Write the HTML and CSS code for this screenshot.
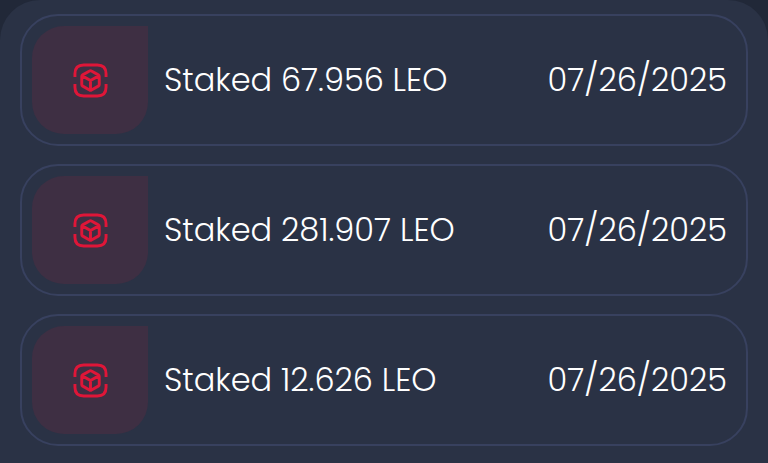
FILE: index.html
```html
<!DOCTYPE html>
<html lang="en">
<head>
<meta charset="utf-8">
<meta name="viewport" content="width=device-width, initial-scale=1">
<title>Staking history</title>
<link rel="stylesheet" href="styles.css">
</head>
<body>
<svg class="sprite" aria-hidden="true">
  <symbol id="stake" viewBox="0 0 36 36">
    <path d="M2 14.500V11Q2 2 11 2H25Q34 2 34 11V14.500M2 21.500V25Q2 34 11 34H25Q34 34 34 25V21.500"/>
    <path d="M17 8.300Q18 7.700 19 8.300L26 12.200Q27 12.800 27 14V22Q27 23.200 26 23.800L19 27.700Q18 28.300 17 27.700L10 23.800Q9 23.200 9 22V14Q9 12.800 10 12.200ZM10 13.500L18 18L26 13.500M18 18V27"/>
  </symbol>
</svg>
<main class="panel">
  <ul class="list">
    <li class="card">
      <span class="tile"><svg class="icon" aria-hidden="true"><use href="#stake"/></svg></span>
      <span class="label">Staked 67.956 LEO</span>
      <time class="date" datetime="2025-07-26">07/26/2025</time>
    </li>
    <li class="card">
      <span class="tile"><svg class="icon" aria-hidden="true"><use href="#stake"/></svg></span>
      <span class="label">Staked 281.907 LEO</span>
      <time class="date" datetime="2025-07-26">07/26/2025</time>
    </li>
    <li class="card">
      <span class="tile"><svg class="icon" aria-hidden="true"><use href="#stake"/></svg></span>
      <span class="label">Staked 12.626 LEO</span>
      <time class="date" datetime="2025-07-26">07/26/2025</time>
    </li>
  </ul>
</main>
</body>
</html>
```
FILE: styles.css
```css
* {
  box-sizing: border-box;
}

body {
  margin: 0;
  background: #212838;
  color: #fff;
  font: 300 32px/48px Poppins, Inter, sans-serif;
}

.sprite {
  position: absolute;
  width: 0;
  height: 0;
}

.panel {
  min-height: 100vh;
  padding: 14px 20px 17px;
  border-radius: 40px 40px 0 0;
  background: #2a3245;
}

.list {
  display: grid;
  gap: 18px;
  margin: 0;
  padding: 0;
  list-style: none;
}

.card {
  display: flex;
  align-items: center;
  gap: 16px;
  padding: 10px 19px 10px 10px;
  border: 2px solid #38415f;
  border-radius: 38px;
}

.tile {
  display: grid;
  place-items: center;
  flex: none;
  width: 116px;
  height: 108px;
  border-radius: 32px 0 32px 32px;
  background: #3e2f43;
}

.icon {
  width: 35px;
  height: 35px;
  fill: none;
  stroke: #df1638;
  stroke-width: 3;
  stroke-linejoin: round;
}

.label {
  flex: 1;
}

.label,
.date {
  white-space: nowrap;
}
```
